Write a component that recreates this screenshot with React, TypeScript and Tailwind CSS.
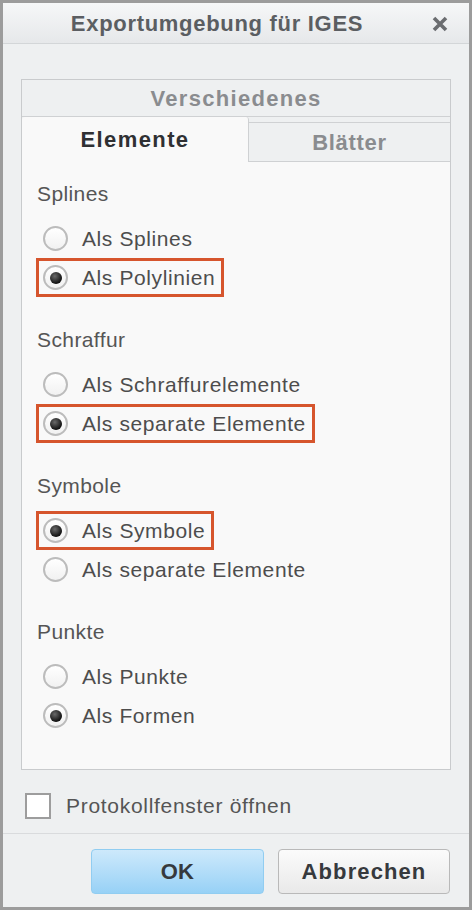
const font = { fontFamily: '"Liberation Sans", Arial, sans-serif' };

function Radio({ checked }: { checked?: boolean }) {
  return (
    <span className="flex h-[25px] w-[25px] shrink-0 items-center justify-center rounded-full border-2 border-[#bcbcbc] bg-gradient-to-b from-[#ffffff] to-[#f1f1f1]">
      {checked && (
        <span className="h-[12px] w-[12px] rounded-full bg-[radial-gradient(circle_at_40%_35%,#6a6a6a,#111111_70%)]" />
      )}
    </span>
  );
}

function Option({ label, checked, marked }: { label: string; checked?: boolean; marked?: boolean }) {
  return (
    <div
      className={
        "flex h-[39px] w-fit items-center gap-[14px] border-[3px] pl-[4px] pr-[6px] " +
        (marked ? "border-[#d6552d]" : "border-transparent")
      }
    >
      <Radio checked={checked} />
      <span className="text-[21px] tracking-[0.6px] text-[#4d4d4d]">{label}</span>
    </div>
  );
}

function Section({ title, options }: { title: string; options: { label: string; checked?: boolean; marked?: boolean }[] }) {
  return (
    <div className="flex flex-col">
      <div className="flex h-[24px] items-center pl-[15px] text-[21px] tracking-[0.4px] text-[#555]">{title}</div>
      <div className="mt-[13px] flex flex-col pl-[14px]">
        {options.map((o) => (
          <Option key={o.label} {...o} />
        ))}
      </div>
    </div>
  );
}

export default function App() {
  return (
    <div style={font} className="h-[910px] w-[472px] bg-[#c9c9c9] p-0">
      <div className="flex h-full flex-col border-[3px] border-[#9c9c9c] bg-[#eef0f1]">
        {/* Titelleiste */}
        <div className="relative flex h-[41px] shrink-0 items-center justify-center border-b border-[#d3d6d8] bg-gradient-to-b from-[#f6f7f8] to-[#e6e8ea] pr-[38px]">
          <span className="text-[22px] font-bold tracking-[0.7px] text-[#5b5e62]">Exportumgebung für IGES</span>
          <svg className="absolute right-[21px] top-[13px]" width="16" height="16" viewBox="0 0 16 16">
            <path d="M2 2 L14 14 M14 2 L2 14" stroke="#6b6d70" strokeWidth="3.6" strokeLinecap="butt" />
          </svg>
        </div>

        <div className="flex flex-1 flex-col px-[18px] pt-[35px]">
          <div className="flex flex-col border border-[#c9cbcd]">
            <div className="flex h-[37px] items-center justify-center border-b border-[#cfd1d3] text-[22px] font-bold tracking-[1.3px] text-[#8a8c8f]">
              Verschiedenes
            </div>
            <div className="flex h-[45px]">
              <div className="flex w-[227px] items-center justify-center rounded-t-[3px] border-r border-[#cfd1d3] bg-[#f9f9f9] text-[22px] font-bold tracking-[1.4px] text-[#2f3033]">
                Elemente
              </div>
              <div className="flex flex-1 flex-col">
                <div className="h-[5px]" />
                <div className="flex flex-1 items-center justify-center border-t border-b border-[#cfd1d3] bg-[#eef0f1] text-[22px] font-bold tracking-[0.7px] text-[#8a8c8f]">
                  Blätter
                </div>
              </div>
            </div>
            <div className="flex h-[607px] flex-col gap-[31px] bg-[#f9f9f9] pt-[20px]">
              <Section
                title="Splines"
                options={[{ label: "Als Splines" }, { label: "Als Polylinien", checked: true, marked: true }]}
              />
              <Section
                title="Schraffur"
                options={[{ label: "Als Schraffurelemente" }, { label: "Als separate Elemente", checked: true, marked: true }]}
              />
              <Section
                title="Symbole"
                options={[{ label: "Als Symbole", checked: true, marked: true }, { label: "Als separate Elemente" }]}
              />
              <Section title="Punkte" options={[{ label: "Als Punkte" }, { label: "Als Formen", checked: true }]} />
            </div>
          </div>

          <div className="mt-[20px] flex items-center gap-[15px] pl-[4px]">
            <span className="h-[26px] w-[26px] border-2 border-[#9d9d9d] bg-white" />
            <span className="text-[21px] tracking-[0.7px] text-[#555]">Protokollfenster öffnen</span>
          </div>
        </div>

        <div className="mt-[11px] flex h-[74px] shrink-0 items-start justify-end gap-[14px] border-t border-[#d9dbdd] px-[19px] pt-[15px]">
          <button className="h-[45px] w-[173px] rounded-[4px] border border-[#91cdf1] bg-gradient-to-b from-[#cde9fb] to-[#97d1f6] text-[22px] font-bold tracking-[0.3px] text-[#36393d]">
            OK
          </button>
          <button className="h-[45px] w-[172px] rounded-[4px] border border-[#b9b9b9] bg-gradient-to-b from-[#fbfbfb] to-[#e9e9e9] text-[22px] font-bold tracking-[1.1px] text-[#36393d]">
            Abbrechen
          </button>
        </div>
      </div>
    </div>
  );
}
